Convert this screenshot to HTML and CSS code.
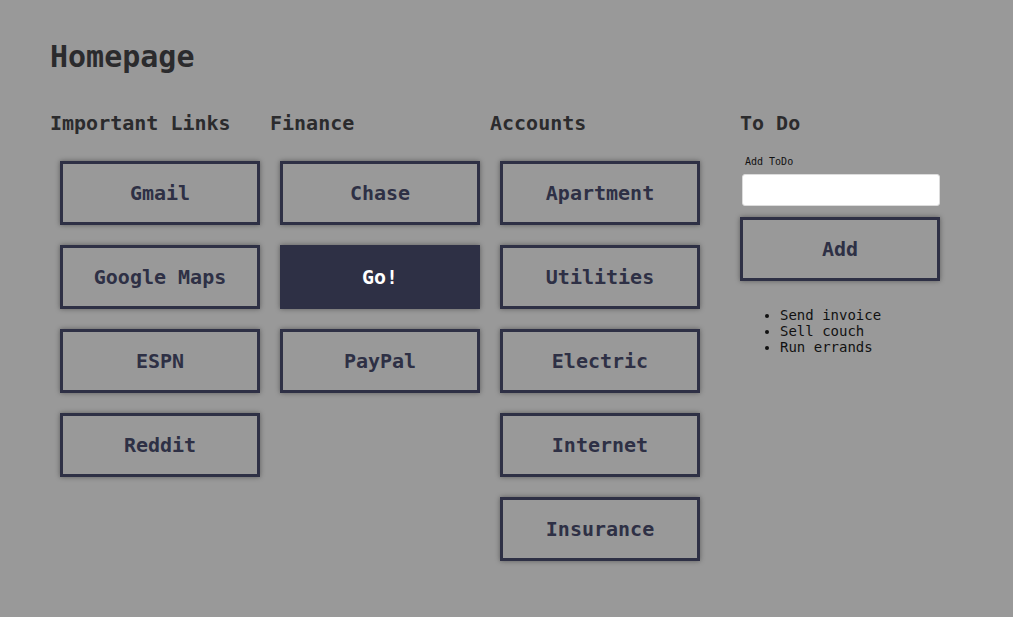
FILE: index.html
```html
<!DOCTYPE html>
<html>
<head>
<meta charset="utf-8">
<link rel="stylesheet" href="styles.css">
</head>
<body>
<div class="page">
  <h1 class="title">Homepage</h1>
  <div class="columns">
    <section class="col col-links">
      <h2 class="col-title">Important Links</h2>
      <div class="btn-list">
        <a class="btn">Gmail</a>
        <a class="btn">Google Maps</a>
        <a class="btn">ESPN</a>
        <a class="btn">Reddit</a>
      </div>
    </section>
    <section class="col col-links">
      <h2 class="col-title">Finance</h2>
      <div class="btn-list">
        <a class="btn">Chase</a>
        <a class="btn btn-active">Go!</a>
        <a class="btn">PayPal</a>
      </div>
    </section>
    <section class="col col-accounts">
      <h2 class="col-title">Accounts</h2>
      <div class="btn-list">
        <a class="btn">Apartment</a>
        <a class="btn">Utilities</a>
        <a class="btn">Electric</a>
        <a class="btn">Internet</a>
        <a class="btn">Insurance</a>
      </div>
    </section>
    <section class="col col-todo">
      <h2 class="col-title">To Do</h2>
      <label class="todo-label">Add ToDo</label>
      <input class="todo-input" type="text">
      <button class="btn todo-add">Add</button>
      <ul class="todo-list">
        <li>Send invoice</li>
        <li>Sell couch</li>
        <li>Run errands</li>
      </ul>
    </section>
  </div>
</div>
</body>
</html>
```

FILE: styles.css
```css
html, body {
  margin: 0;
  padding: 0;
}
body {
  background: #999999;
  font-family: "DejaVu Sans Mono", monospace;
  color: #2a2a2a;
  width: 1013px;
  height: 617px;
  overflow: hidden;
}
.page {
  padding: 39px 0 0 50px;
}
.title {
  margin: 0;
  font-size: 30px;
  font-weight: bold;
  line-height: 35px;
  color: #2b2b2d;
}
.columns {
  display: flex;
  margin-top: 38px;
}
.col {
  display: flex;
  flex-direction: column;
}
.col-links {
  width: 220px;
}
.col-accounts {
  width: 250px;
}
.col-todo {
  width: 200px;
}
.col-title {
  margin: 0;
  font-size: 20px;
  font-weight: bold;
  line-height: 23px;
  color: #2b2b2d;
}
.btn-list {
  display: flex;
  flex-direction: column;
  gap: 20px;
  padding-left: 10px;
  margin-top: 26px;
}
.btn {
  box-sizing: border-box;
  width: 200px;
  height: 64px;
  border: 3px solid #2e3045;
  background: transparent;
  box-shadow: 0 0 5px rgba(0, 0, 0, 0.4);
  display: flex;
  align-items: center;
  justify-content: center;
  font-family: "DejaVu Sans Mono", monospace;
  font-size: 20px;
  font-weight: bold;
  color: #2e3045;
  padding: 0;
}
.btn-active {
  background: #2e3045;
  color: #ffffff;
}
.todo-label {
  margin: 21px 0 0 5px;
  font-size: 10px;
  line-height: 12px;
  color: #111;
}
.todo-input {
  box-sizing: border-box;
  margin: 6px 0 0 2px;
  width: 198px;
  height: 32px;
  border: 1px solid #dcdcdc;
  border-radius: 3px;
  background: #fff;
  padding: 0 4px;
}
.todo-add {
  margin-top: 11px;
}
.todo-list {
  margin: 26px 0 0 0;
  padding-left: 40px;
  font-size: 14px;
  line-height: 16px;
  color: #111;
}
```
